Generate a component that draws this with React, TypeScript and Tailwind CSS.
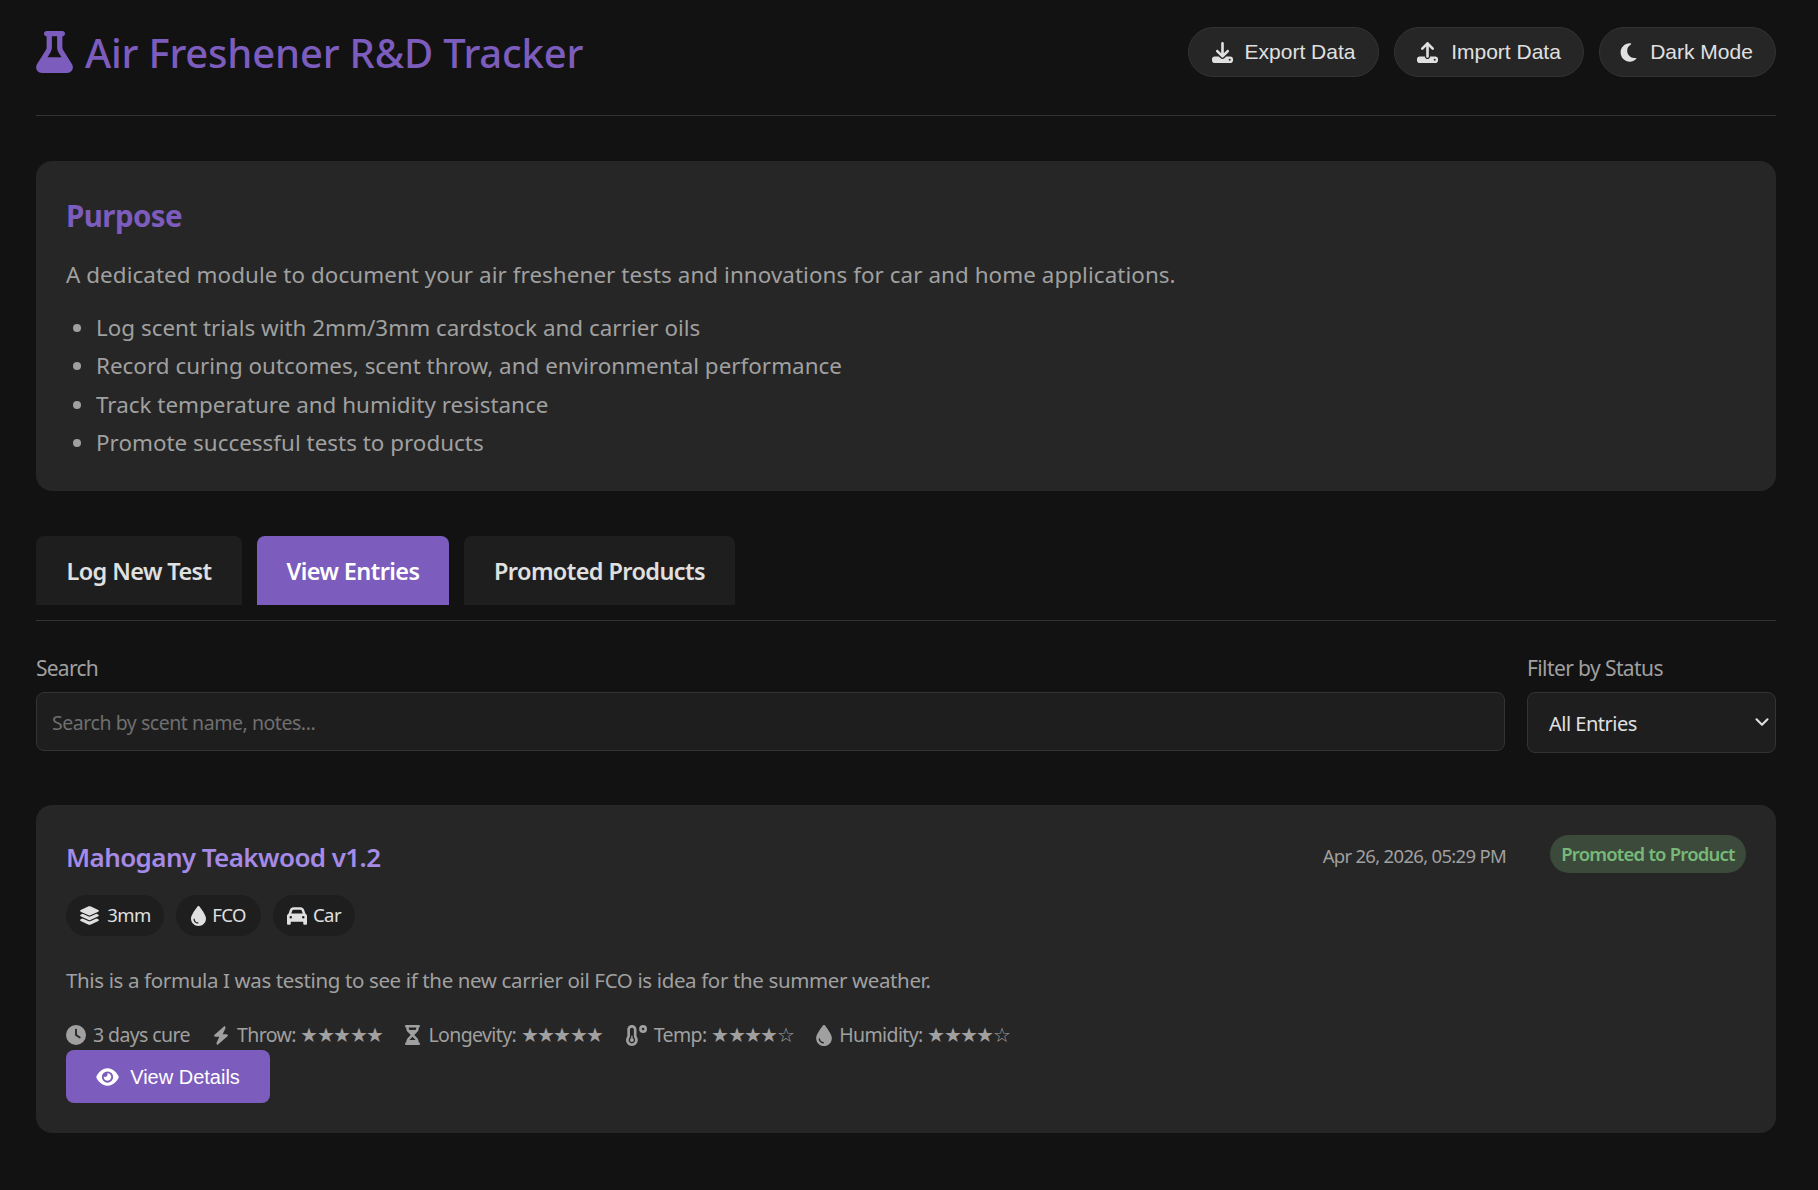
import { ChevronDown } from "lucide-react";
import {
  FaFlask,
  FaDownload,
  FaUpload,
  FaMoon,
  FaLayerGroup,
  FaDroplet,
  FaCar,
  FaClock,
  FaBolt,
  FaHourglassHalf,
  FaTemperatureLow,
  FaEye,
} from "react-icons/fa6";

const sans = "font-['Noto_Sans','Open_Sans',sans-serif]";
const arial = "font-['Liberation_Sans',Arial,sans-serif]";

const App = () => {
  return (
    <div className={`min-h-[1190px] bg-[#121212] pl-[36px] pr-[42px] pt-[27px] ${sans}`}>
      {/* Header */}
      <header className="flex items-start justify-between border-b border-[#333] h-[89px]">
        <h1 className="flex items-center gap-[12px] h-[51px] text-[40px] font-medium tracking-[-0.2px] text-[#7c5cbc]">
          <FaFlask className="w-[37px] h-[42px] -translate-y-[1px]" />
          Air Freshener R&amp;D Tracker
        </h1>
        <div className={`flex gap-[15px] text-[21px] text-[#e0e0e0] ${arial}`}>
          <button className="flex items-center gap-[12px] h-[50px] w-[191px] justify-center rounded-full bg-[#262626] border border-[#333]">
            <FaDownload className="w-[21px] h-[21px]" />
            Export Data
          </button>
          <button className="flex items-center gap-[13px] h-[50px] w-[190px] justify-center rounded-full bg-[#262626] border border-[#333]">
            <FaUpload className="w-[21px] h-[21px]" />
            Import Data
          </button>
          <button className="flex items-center gap-[12px] h-[50px] w-[177px] justify-center rounded-full bg-[#262626] border border-[#333] pr-[3px]">
            <FaMoon className="w-[19px] h-[21px]" />
            Dark Mode
          </button>
        </div>
      </header>

      {/* Purpose */}
      <section className="mt-[45px] h-[330px] rounded-[16px] bg-[#262626] px-[30px] pt-[35px]">
        <h2 className="text-[29.5px] leading-[40px] font-bold tracking-[-0.6px] text-[#7c5cbc]">Purpose</h2>
        <p className="mt-[22px] text-[22.4px] leading-[34px] tracking-[0.07px] text-[#a0a0a0]">
          A dedicated module to document your air freshener tests and innovations for car and home applications.
        </p>
        <ul className="mt-[17px] list-disc pl-[30px] text-[22.4px] leading-[38.3px] tracking-[0.02px] text-[#a0a0a0]">
          <li>Log scent trials with 2mm/3mm cardstock and carrier oils</li>
          <li>Record curing outcomes, scent throw, and environmental performance</li>
          <li>Track temperature and humidity resistance</li>
          <li>Promote successful tests to products</li>
        </ul>
      </section>

      {/* Tabs */}
      <nav className="mt-[45px] flex gap-[15px] border-b border-[#333] h-[85px] text-[23.5px] font-semibold tracking-[-0.6px]">
        <button className="h-[69px] w-[206px] rounded-t-[8px] bg-[#1e1e1e] pt-[2px] text-[#e0e0e0]">Log New Test</button>
        <button className="h-[69px] w-[192px] rounded-t-[8px] bg-[#7c5cbc] pt-[2px] text-white">View Entries</button>
        <button className="h-[69px] w-[271px] rounded-t-[8px] bg-[#1e1e1e] pt-[2px] text-[#e0e0e0]">Promoted Products</button>
      </nav>

      {/* Filters */}
      <div className="mt-[30px] flex gap-[22px]">
        <div className="flex-1">
          <label className="block text-[21px] leading-[34px] tracking-[-0.75px] text-[#a0a0a0]">Search</label>
          <div className="mt-[7px] flex h-[59px] items-center rounded-[8px] border border-[#333] bg-[#1e1e1e] px-[15px] pt-[2px] text-[19.5px] tracking-[-0.45px] text-[#6f6f6f]">
            Search by scent name, notes...
          </div>
        </div>
        <div className="w-[249px]">
          <label className="block text-[21px] leading-[34px] tracking-[-0.6px] text-[#a0a0a0]">Filter by Status</label>
          <div className="mt-[7px] flex h-[61px] items-center justify-between rounded-[8px] border border-[#333] bg-[#1e1e1e] pl-[21px] pr-[2px] pt-[2px] text-[20px] tracking-[-0.5px] text-[#e0e0e0]">
            All Entries
            <ChevronDown className="w-[22px] h-[22px] -translate-y-[2px]" strokeWidth={2.3} />
          </div>
        </div>
      </div>

      {/* Entry card */}
      <article className="mt-[52px] h-[328px] rounded-[16px] bg-[#262626] px-[30px] pt-[30px]">
        <div className="flex items-start justify-between">
          <h3 className="mt-[3px] text-[26px] leading-[38px] font-semibold tracking-[-0.6px] text-[#a58ae6]">Mahogany Teakwood v1.2</h3>
          <div className="flex items-start gap-[44px]">
            <span className="mt-[7px] text-[18.5px] tracking-[-0.7px] text-[#a0a0a0]">Apr 26, 2026, 05:29 PM</span>
            <span className="flex h-[38px] w-[196px] items-center justify-center rounded-full bg-[#3b4a3a] text-[18.5px] font-semibold tracking-[-0.8px] text-[#78b878]">
              Promoted to Product
            </span>
          </div>
        </div>

        <div className="mt-[19px] flex gap-[12px] text-[18.5px] tracking-[-0.6px] text-[#e0e0e0]">
          <span className="flex h-[41px] w-[98px] items-center justify-center gap-[7px] rounded-full bg-[#1e1e1e] pb-[2px]">
            <FaLayerGroup className="w-[21px] h-[21px] translate-y-[1px]" /> 3mm
          </span>
          <span className="flex h-[41px] w-[85px] items-center justify-center gap-[6px] rounded-full bg-[#1e1e1e] pb-[2px]">
            <FaDroplet className="w-[15px] h-[20px] translate-y-[1px]" /> FCO
          </span>
          <span className="flex h-[41px] w-[82px] items-center justify-center gap-[6px] rounded-full bg-[#1e1e1e] pb-[2px]">
            <FaCar className="w-[20px] h-[20px] translate-y-[1px]" /> Car
          </span>
        </div>

        <p className="mt-[29px] text-[20.5px] leading-[30px] tracking-[-0.37px] text-[#a0a0a0]">
          This is a formula I was testing to see if the new carrier oil FCO is idea for the summer weather.
        </p>

        <div className="mt-[25px] flex h-[30px] items-center gap-[23px] text-[19.5px] tracking-[-0.6px] text-[#a0a0a0]">
          <span className="flex items-center gap-[7px]"><FaClock className="w-[20px] h-[20px]" /> 3 days cure</span>
          <span className="flex items-center gap-[8px]"><FaBolt className="w-[16px] h-[21px]" /> <span>Throw: <span className="tracking-[-1.6px]">★★★★★</span></span></span>
          <span className="flex items-center gap-[8px]"><FaHourglassHalf className="w-[15px] h-[20px]" /> <span>Longevity: <span className="tracking-[-1.6px]">★★★★★</span></span></span>
          <span className="flex items-center gap-[7px]"><FaTemperatureLow className="w-[21px] h-[21px]" /> <span>Temp: <span className="tracking-[-1.6px]">★★★★☆</span></span></span>
          <span className="flex items-center gap-[7px]"><FaDroplet className="w-[16px] h-[21px]" /> <span>Humidity: <span className="tracking-[-1.6px]">★★★★☆</span></span></span>
        </div>

        <button className={`flex h-[53px] w-[204px] items-center justify-center gap-[11px] rounded-[8px] bg-[#7c5cbc] text-[20px] text-white ${arial}`}>
          <FaEye className="w-[23px] h-[20px]" />
          View Details
        </button>
      </article>
    </div>
  );
};

export default App;
